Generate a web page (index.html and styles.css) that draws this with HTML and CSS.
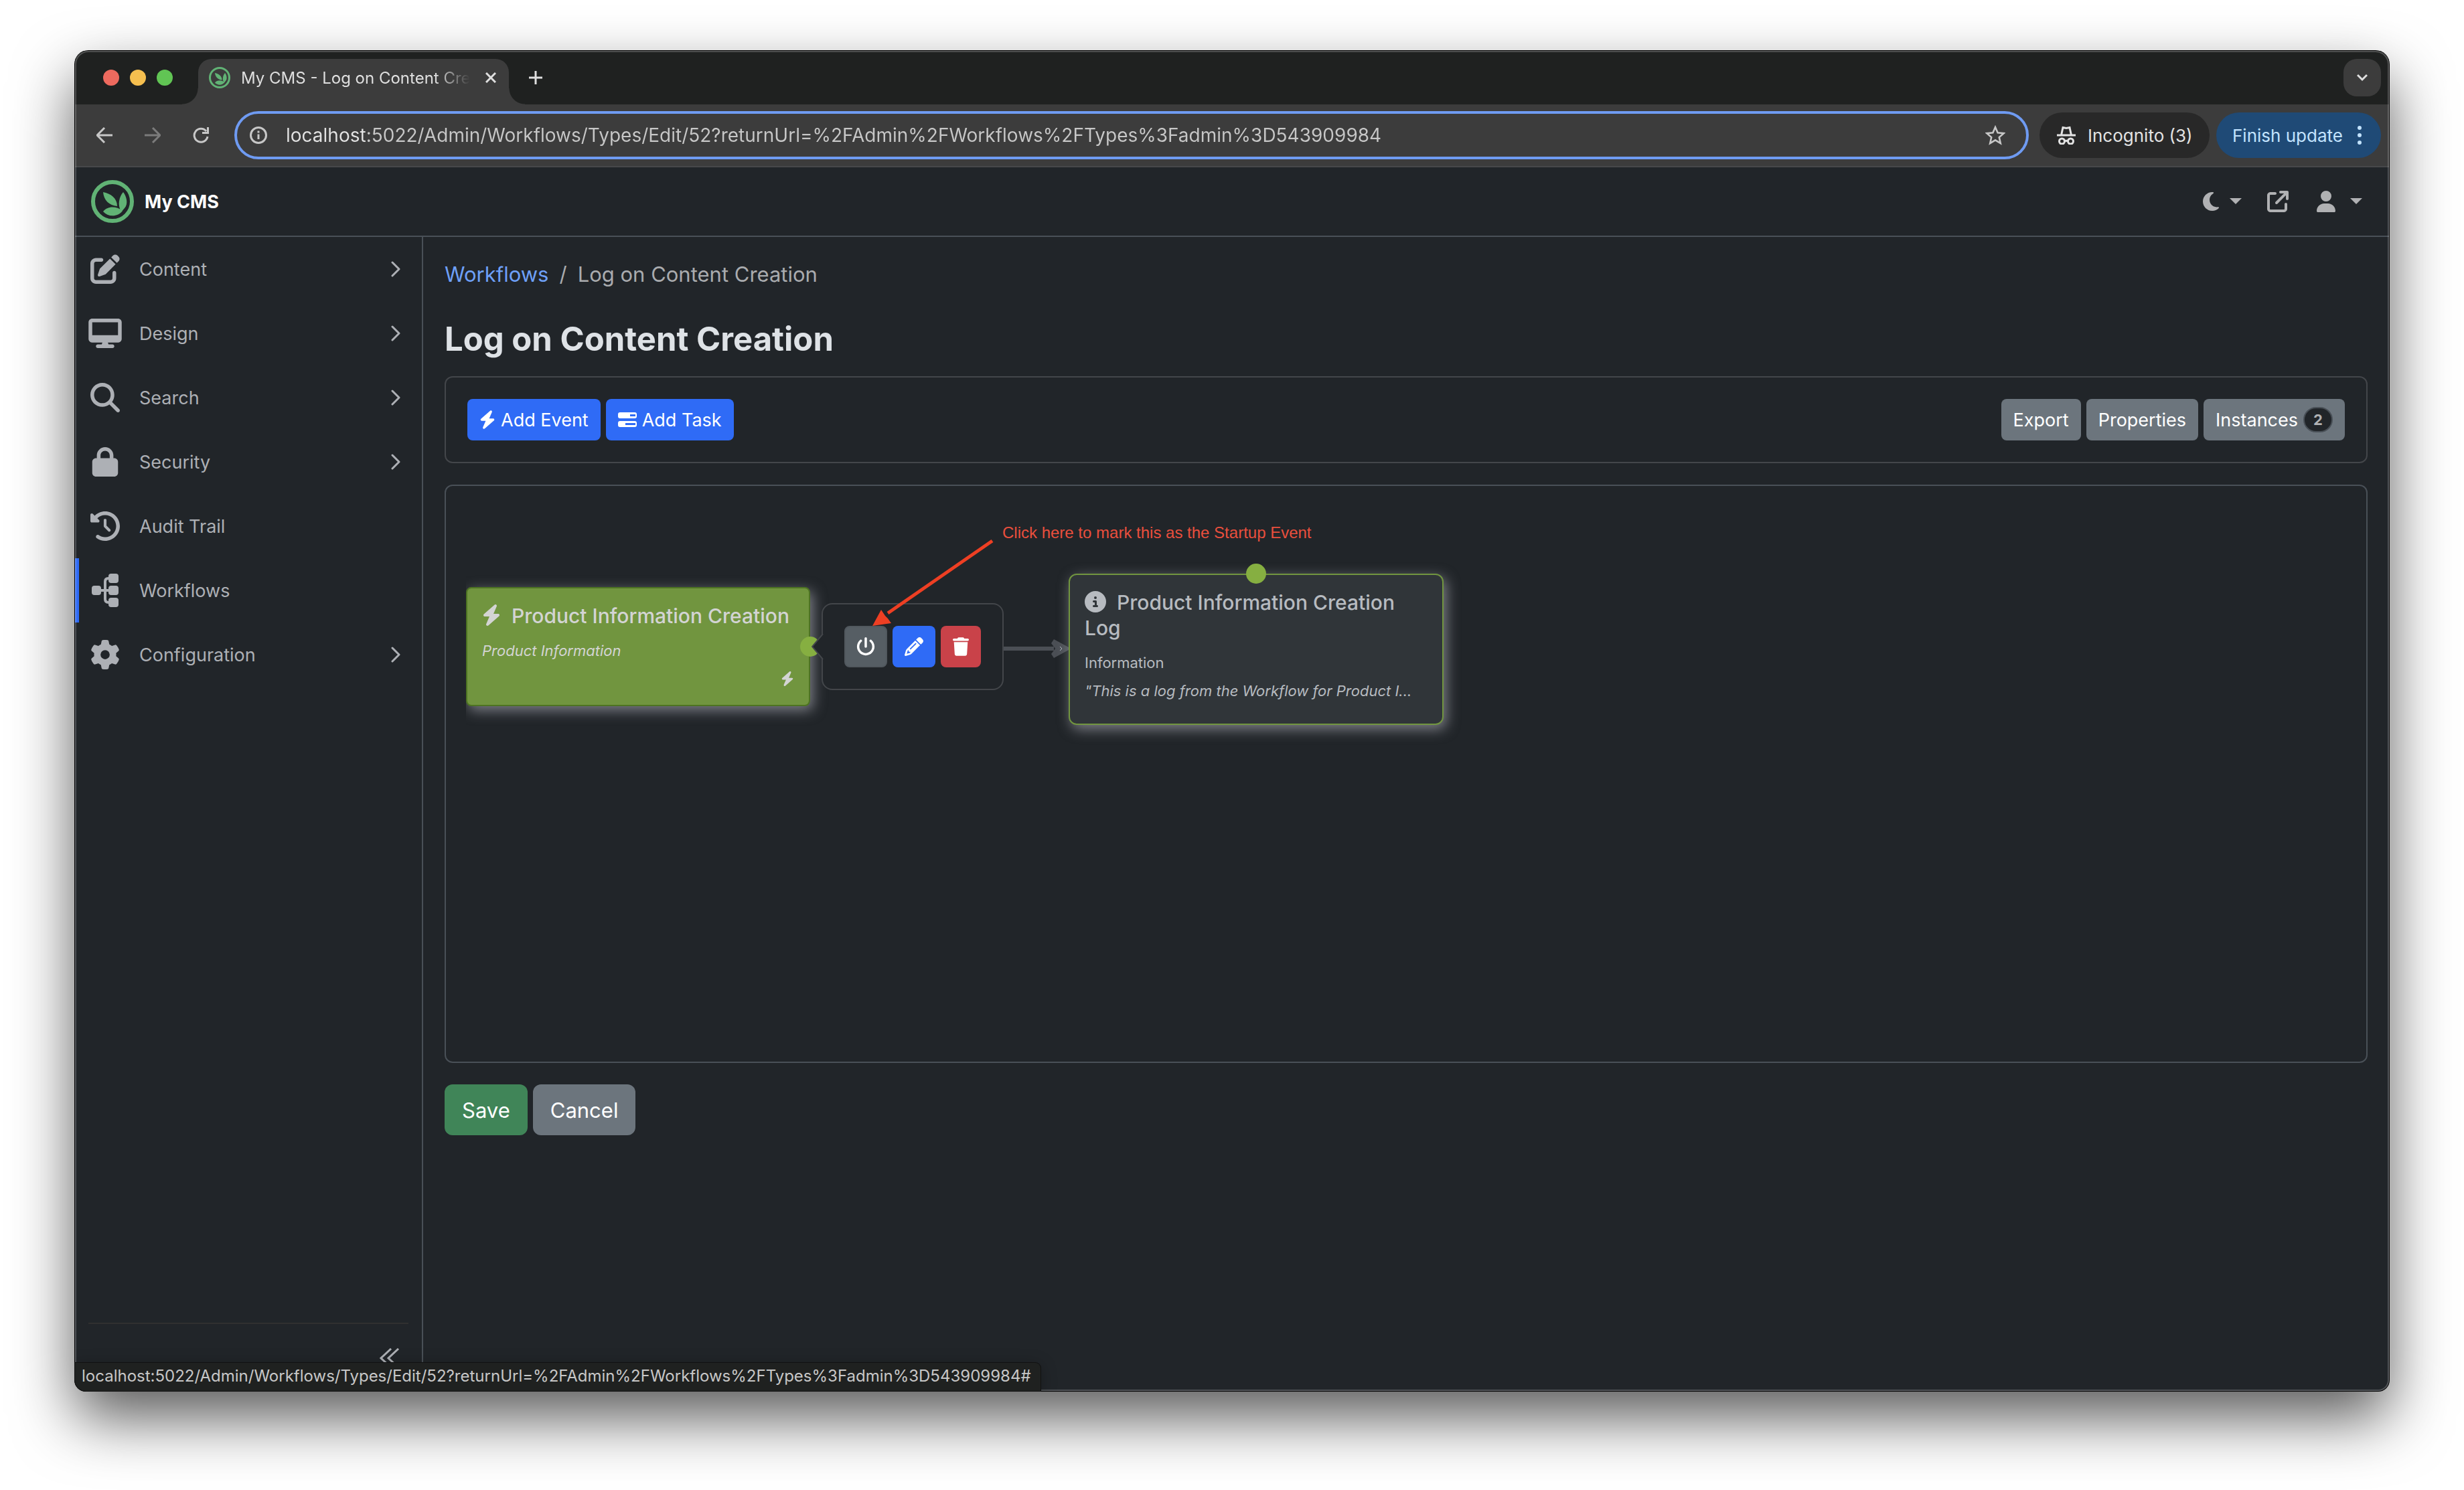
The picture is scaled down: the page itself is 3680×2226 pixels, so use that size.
FILE: index.html
```html
<!DOCTYPE html>
<html lang="en">
<head>
<meta charset="utf-8">
<title>My CMS - Log on Content Creation</title>
<link rel="stylesheet" href="styles.css">
</head>
<body>
<svg class="sprite" aria-hidden="true">
  <symbol id="logo" viewBox="0 0 64 64">
    <circle cx="32" cy="32" r="29" fill="none" stroke="currentColor" stroke-width="6"/>
    <path d="M18 18C29 20 39 27 39 39C27 38 19 30 18 18z"/>
    <path d="M48 18C53 24 56 36 50 42C48 44 47 46 45 47C39 37 42 25 48 18z"/>
    <path d="M18 47C24 39 37 38 47 46C40 55 26 56 18 47z"/>
  </symbol>
  <symbol id="bolt" viewBox="0 0 448 512"><path d="M349.4 44.6c5.9-13.7 1.5-29.7-10.6-38.5s-28.6-8-39.9 1.8l-256 224c-10 8.8-13.6 22.9-8.9 35.3S50.7 288 64 288H175.5L98.6 467.4c-5.9 13.7-1.5 29.7 10.6 38.5s28.6 8 39.9-1.8l256-224c10-8.8 13.6-22.9 8.9-35.3s-16.6-20.7-30-20.7H272.5L349.4 44.6z"/></symbol>
  <symbol id="chevron" viewBox="0 0 14 24"><path d="M2 2l10 10L2 22" fill="none" stroke="currentColor" stroke-width="3" stroke-linecap="round" stroke-linejoin="round"/></symbol>
  <symbol id="caret" viewBox="0 0 18 10"><path d="M0 0h18L9 9z"/></symbol>
</svg>

<div class="window">
  <div class="tabstrip">
    <div class="lights"><i class="light red"></i><i class="light yellow"></i><i class="light green"></i></div>
    <div class="tab">
      <svg class="i32 brand-color"><use href="#logo"/></svg>
      <span class="tab-title">My CMS - Log on Content Cre</span>
      <button class="plain" aria-label="Close tab"><svg class="i16" viewBox="0 0 16 16"><path d="M1 1l14 14M15 1L1 15" fill="none" stroke="currentColor" stroke-width="3"/></svg></button>
    </div>
    <button class="plain new-tab" aria-label="New tab"><svg class="i20" viewBox="0 0 20 20"><path d="M10 0v20M0 10h20" fill="none" stroke="currentColor" stroke-width="3"/></svg></button>
    <button class="tab-search" aria-label="Search tabs"><svg class="i16" viewBox="0 0 16 16"><path d="M1 4l7 7 7-7" fill="none" stroke="currentColor" stroke-width="3"/></svg></button>
  </div>

  <div class="toolbar">
    <div class="nav-buttons">
      <button class="plain" aria-label="Back"><svg class="i24" viewBox="0 0 24 24"><path d="M12 1L1 12l11 11M1 12h23" fill="none" stroke="currentColor" stroke-width="3"/></svg></button>
      <button class="plain dim" aria-label="Forward"><svg class="i24" viewBox="0 0 24 24"><path d="M12 1l11 11-11 11M23 12H0" fill="none" stroke="currentColor" stroke-width="3"/></svg></button>
      <button class="plain" aria-label="Reload"><svg class="i24" viewBox="0 0 24 24"><path d="M22 14A10 10 0 1 1 20 6" fill="none" stroke="currentColor" stroke-width="3"/><path d="M24 0v10H14V7h7V0z"/></svg></button>
    </div>
    <div class="omnibox">
      <svg class="i26" viewBox="0 0 26 26"><circle cx="13" cy="13" r="11.5" fill="none" stroke="currentColor" stroke-width="3"/><path d="M11.5 11.500h3v7.500h-3zM11.500 6.500h3v3h-3z"/></svg>
      <input class="url" type="text" aria-label="Address" value="localhost:5022/Admin/Workflows/Types/Edit/52?returnUrl=%2FAdmin%2FWorkflows%2FTypes%3Fadmin%3D543909984">
      <button class="plain" aria-label="Bookmark this page"><svg class="i30" viewBox="0 0 30 30"><path d="M15 3l3.600 8.300 9 .8-6.800 6 2 8.900-7.800-4.700L7.200 27l2-8.900-6.800-6 9-.8z" fill="none" stroke="currentColor" stroke-width="2.600"/></svg></button>
    </div>
    <button class="pill incognito"><svg class="i28 outline" viewBox="0 0 28 28"><path d="M0 14h28M6.500 14L9 2.500 14 3.500l5-1L21.500 14M12 23q2-1.500 4 0"/><circle cx="7.500" cy="23" r="4"/><circle cx="20.500" cy="23" r="4"/></svg>Incognito (3)</button>
    <button class="pill update">Finish update<svg class="dots" viewBox="0 0 6 28"><circle cx="3" cy="3" r="3"/><circle cx="3" cy="14" r="3"/><circle cx="3" cy="25" r="3"/></svg></button>
  </div>

  <header class="navbar">
    <a class="brand" href="#"><svg class="brand-logo brand-color"><use href="#logo"/></svg>My CMS</a>
    <div class="nav-tools">
      <button class="plain tool" aria-label="Theme"><svg class="moon" viewBox="0 32 384 448"><path d="M223.500 32C100 32 0 132.300 0 256S100 480 223.500 480c60.600 0 115.500-24.200 155.800-63.400c5-4.900 6.300-12.500 3.100-18.700s-10.100-9.700-17-8.500c-9.800 1.700-19.800 2.600-30.100 2.600c-96.900 0-175.500-78.800-175.500-176c0-65.800 36-123.100 89.300-153.300c6.100-3.500 9.200-10.500 7.700-17.300s-7.300-11.900-14.300-12.500c-6.300-.5-12.600-.8-19-.8z"/></svg><svg class="caret"><use href="#caret"/></svg></button>
      <a class="tool" href="#" aria-label="Open site"><svg class="i32" viewBox="0 0 512 512"><path d="M320 0c-17.700 0-32 14.300-32 32s14.300 32 32 32h82.700L201.400 265.400c-12.500 12.500-12.500 32.800 0 45.300s32.800 12.500 45.300 0L448 109.300V192c0 17.700 14.300 32 32 32s32-14.300 32-32V32c0-17.700-14.300-32-32-32H320zM80 32C35.800 32 0 67.800 0 112V432c0 44.200 35.800 80 80 80H400c44.200 0 80-35.800 80-80V320c0-17.700-14.300-32-32-32s-32 14.300-32 32V432c0 8.800-7.200 16-16 16H80c-8.800 0-16-7.200-16-16V112c0-8.800 7.200-16 16-16H192c17.700 0 32-14.300 32-32s-14.300-32-32-32H80z"/></svg></a>
      <button class="plain tool user" aria-label="Account"><svg class="i28x32" viewBox="0 0 448 512"><path d="M224 256A128 128 0 1 0 224 0a128 128 0 1 0 0 256zm-45.700 48C79.800 304 0 383.800 0 482.300C0 498.700 13.300 512 29.700 512H418.300c16.400 0 29.700-13.300 29.700-29.700C448 383.800 368.200 304 269.700 304H178.300z"/></svg><svg class="caret"><use href="#caret"/></svg></button>
    </div>
  </header>

  <div class="body">
    <aside class="sidebar">
      <nav>
        <a class="item" href="#"><span class="ico"><svg class="i44" viewBox="0 0 512 512"><path d="M471.600 21.700c-21.900-21.900-57.300-21.900-79.200 0L362.300 51.700l97.900 97.900 30.100-30.100c21.900-21.900 21.900-57.300 0-79.200L471.600 21.700zm-299.200 220c-6.100 6.100-10.800 13.600-13.500 21.900l-29.600 88.800c-2.900 8.600-.6 18.100 5.800 24.600s15.900 8.700 24.600 5.800l88.800-29.600c8.200-2.700 15.700-7.400 21.900-13.500L437.700 172.300 339.700 74.300 172.400 241.700zM96 64C43 64 0 107 0 160V416c0 53 43 96 96 96H352c53 0 96-43 96-96V320c0-17.700-14.300-32-32-32s-32 14.300-32 32v96c0 17.700-14.300 32-32 32H96c-17.700 0-32-14.300-32-32V160c0-17.700 14.300-32 32-32h96c17.700 0 32-14.300 32-32s-14.300-32-32-32H96z"/></svg></span>Content<svg class="chev"><use href="#chevron"/></svg></a>
        <a class="item" href="#"><span class="ico"><svg class="i50x44" viewBox="0 0 576 512"><path d="M64 0C28.700 0 0 28.700 0 64V352c0 35.300 28.700 64 64 64H240l-10.700 32H160c-17.700 0-32 14.300-32 32s14.300 32 32 32H416c17.700 0 32-14.300 32-32s-14.300-32-32-32H346.700L336 416H512c35.300 0 64-28.700 64-64V64c0-35.300-28.700-64-64-64H64zM512 64V288H64V64H512z"/></svg></span>Design<svg class="chev"><use href="#chevron"/></svg></a>
        <a class="item" href="#"><span class="ico"><svg class="i44" viewBox="0 0 512 512"><path d="M416 208c0 45.900-14.900 88.300-40 122.700L502.600 457.400c12.500 12.500 12.500 32.800 0 45.300s-32.800 12.500-45.300 0L330.700 376c-34.400 25.200-76.800 40-122.700 40C93.100 416 0 322.900 0 208S93.100 0 208 0S416 93.100 416 208zM208 352a144 144 0 1 0 0-288 144 144 0 1 0 0 288z"/></svg></span>Search<svg class="chev"><use href="#chevron"/></svg></a>
        <a class="item" href="#"><span class="ico"><svg class="i44" viewBox="-32 0 512 512"><path d="M144 144v48H304V144c0-44.200-35.800-80-80-80s-80 35.800-80 80zM80 192V144C80 64.500 144.500 0 224 0s144 64.500 144 144v48h16c35.300 0 64 28.700 64 64V448c0 35.300-28.700 64-64 64H64c-35.300 0-64-28.700-64-64V256c0-35.300 28.700-64 64-64H80z"/></svg></span>Security<svg class="chev"><use href="#chevron"/></svg></a>
        <a class="item" href="#"><span class="ico"><svg class="i44" viewBox="0 0 512 512"><path d="M75 75L41 41C25.900 25.900 0 36.600 0 57.900V168c0 13.300 10.700 24 24 24H134.100c21.400 0 32.100-25.900 17-41l-30.800-30.800C155 85.500 203 64 256 64c106 0 192 86 192 192s-86 192-192 192c-40.800 0-78.600-12.700-109.700-34.400c-14.500-10.100-34.400-6.600-44.600 7.900s-6.600 34.400 7.900 44.600C151.200 495 201.700 512 256 512c141.400 0 256-114.600 256-256S397.400 0 256 0C185.300 0 121.300 28.700 75 75zm181 53c-13.300 0-24 10.700-24 24V256c0 6.400 2.500 12.500 7 17l72 72c9.400 9.400 24.600 9.400 33.900 0s9.400-24.600 0-33.900l-65-65V152c0-13.300-10.700-24-24-24z"/></svg></span>Audit Trail</a>
        <a class="item active" href="#"><span class="ico"><svg class="i40x50" viewBox="0 0 40 50"><path d="M14 25h12M34 7h-9q-5 0-5 5v26q0 5 5 5h9" fill="none" stroke="currentColor" stroke-width="4"/><rect x="0" y="18" width="14" height="14" rx="4"/><rect x="25" y="0" width="15" height="14" rx="4"/><rect x="25" y="18" width="15" height="14" rx="4"/><rect x="25" y="36" width="15" height="14" rx="4"/></svg></span>Workflows</a>
        <a class="item" href="#"><span class="ico"><svg class="i44" viewBox="0 0 512 512"><path d="M495.900 166.600c3.200 8.700 .5 18.400-6.400 24.600l-43.300 39.400c1.100 8.300 1.700 16.800 1.700 25.400s-.6 17.100-1.700 25.400l43.300 39.400c6.900 6.200 9.600 15.900 6.400 24.600c-4.400 11.900-9.700 23.300-15.800 34.300l-4.700 8.100c-6.600 11-14 21.400-22.100 31.200c-5.900 7.200-15.700 9.600-24.500 6.800l-55.700-17.700c-13.400 10.300-28.200 18.900-44 25.400l-12.500 57.100c-2 9.100-9 16.300-18.200 17.800c-13.800 2.300-28 3.500-42.500 3.500s-28.700-1.200-42.500-3.500c-9.200-1.500-16.200-8.700-18.200-17.800l-12.500-57.100c-15.800-6.500-30.600-15.100-44-25.400L83.100 425.900c-8.800 2.800-18.600 .3-24.500-6.800c-8.100-9.800-15.500-20.200-22.100-31.200l-4.700-8.100c-6.100-11-11.400-22.400-15.800-34.300c-3.200-8.700-.5-18.400 6.400-24.600l43.300-39.400C64.600 273.100 64 264.600 64 256s.6-17.100 1.700-25.400L22.400 191.200c-6.900-6.200-9.600-15.900-6.400-24.600c4.400-11.900 9.700-23.300 15.800-34.300l4.700-8.100c6.600-11 14-21.400 22.100-31.200c5.900-7.200 15.700-9.600 24.500-6.800l55.700 17.700c13.400-10.300 28.200-18.900 44-25.400l12.500-57.100c2-9.100 9-16.300 18.200-17.800C227.300 1.200 241.500 0 256 0s28.700 1.200 42.500 3.500c9.200 1.500 16.200 8.700 18.200 17.800l12.500 57.100c15.800 6.500 30.600 15.100 44 25.400l55.700-17.700c8.800-2.800 18.600-.3 24.500 6.800c8.100 9.800 15.500 20.200 22.100 31.200l4.700 8.100c6.100 11 11.400 22.400 15.800 34.300zM256 336a80 80 0 1 0 0-160 80 80 0 1 0 0 160z"/></svg></span>Configuration<svg class="chev"><use href="#chevron"/></svg></a>
      </nav>
      <div class="collapse">
        <button class="plain" aria-label="Collapse menu"><svg class="i30" viewBox="0 0 30 30"><path d="M17 1L2 15l15 14M28 1L13 15l15 14" fill="none" stroke="currentColor" stroke-width="3"/></svg></button>
      </div>
    </aside>

    <main class="main">
      <ol class="breadcrumb"><li><a href="#">Workflows</a></li><li>/</li><li>Log on Content Creation</li></ol>
      <h1>Log on Content Creation</h1>

      <section class="card actions">
        <div class="group">
          <button class="btn primary"><svg class="bolt-md"><use href="#bolt"/></svg>Add Event</button>
          <button class="btn primary"><svg class="task" viewBox="0 0 28 22"><path fill-rule="evenodd" d="M3 0h22a3 3 0 0 1 3 3v3a3 3 0 0 1-3 3H3a3 3 0 0 1-3-3V3a3 3 0 0 1 3-3zM18 3v3h8V3zM3 13h22a3 3 0 0 1 3 3v3a3 3 0 0 1-3 3H3a3 3 0 0 1-3-3v-3a3 3 0 0 1 3-3zM11 16v3h15v-3z"/></svg>Add Task</button>
        </div>
        <div class="group">
          <button class="btn">Export</button>
          <button class="btn">Properties</button>
          <button class="btn">Instances<span class="badge">2</span></button>
        </div>
      </section>

      <section class="card canvas">
        <div class="surface">
          <article class="node event">
            <h2><svg class="node-bolt"><use href="#bolt"/></svg>Product Information Creation</h2>
            <p><em>Product Information</em></p>
            <svg class="corner-bolt"><use href="#bolt"/></svg>
          </article>
          <i class="port port-out"></i>
          <svg class="link" viewBox="0 0 100 30"><path d="M0 15h76" fill="none" stroke="currentColor" stroke-width="6"/><path d="M76 1L98 13v4L76 29l-4-6 6-8-6-8z"/><path d="M85 12l3 3-3 3" fill="none" stroke="#adb5bd" stroke-width="1"/></svg>
          <article class="node task-node">
            <h2><svg class="node-info" viewBox="0 0 512 512"><path d="M256 512A256 256 0 1 0 256 0a256 256 0 1 0 0 512zM216 336h24V272H216c-13.300 0-24-10.700-24-24s10.700-24 24-24h48c13.300 0 24 10.700 24 24v88h8c13.300 0 24 10.700 24 24s-10.700 24-24 24H216c-13.300 0-24-10.700-24-24s10.700-24 24-24zm40-208a32 32 0 1 1 0 64 32 32 0 1 1 0-64z"/></svg>Product Information Creation Log</h2>
            <p>Information</p>
            <p class="quote"><em>"This is a log from the Workflow for Product I...</em></p>
          </article>
          <i class="port port-in"></i>
          <div class="popover">
            <svg class="tip" viewBox="0 0 18 40"><path d="M18 1L1 20l17 19z" class="tip-fill"/><path d="M17 1L1 20l16 19" class="tip-line"/></svg>
            <button class="btn square startup" aria-label="Startup"><svg class="i28" viewBox="0 0 512 512"><path d="M288 32c0-17.700-14.300-32-32-32s-32 14.300-32 32V256c0 17.700 14.300 32 32 32s32-14.300 32-32V32zM143.500 120.600c13.600-11.300 15.400-31.500 4.100-45.100s-31.500-15.400-45.100-4.100C49.700 115.400 16 181.800 16 256c0 132.500 107.500 240 240 240s240-107.500 240-240c0-74.200-33.800-140.600-86.600-184.600c-13.600-11.300-33.800-9.400-45.100 4.100s-9.400 33.800 4.100 45.100c38.900 32.300 63.500 81 63.500 135.400c0 97.200-78.800 176-176 176s-176-78.800-176-176c0-54.400 24.700-103.100 63.500-135.400z"/></svg></button>
            <button class="btn square primary" aria-label="Edit"><svg class="i28" viewBox="0 0 512 512"><path d="M410.300 231l11.300-11.300-33.900-33.900-62.100-62.100L291.700 89.800l-11.300 11.300-22.600 22.600L58.600 322.900c-10.400 10.400-18 23.300-22.200 37.400L1 480.700c-2.500 8.400-.2 17.500 6.100 23.700s15.300 8.500 23.700 6.100l120.300-35.400c14.100-4.200 27-11.800 37.400-22.200L387.700 253.700 410.300 231zM160 399.400l-9.100 22.700c-4 3.100-8.500 5.400-13.300 6.900L59.400 452l23-78.100c1.400-4.900 3.800-9.400 6.900-13.300l22.700-9.100v32c0 8.800 7.200 16 16 16h32zM362.700 18.700L348.300 33.200 325.700 55.800 314.300 67.100l33.900 33.900 62.100 62.100 33.900 33.900 11.300-11.300 22.600-22.600 14.500-14.500c25-25 25-65.500 0-90.500L453.300 18.700c-25-25-65.500-25-90.500 0zm-47.400 168l-144 144c-6.200 6.200-16.400 6.200-22.600 0s-6.200-16.400 0-22.600l144-144c6.200-6.200 16.400-6.200 22.600 0s6.200 16.400 0 22.600z"/></svg></button>
            <button class="btn square danger" aria-label="Delete"><svg class="i24x28" viewBox="0 0 448 512"><path d="M135.200 17.700L128 32H32C14.300 32 0 46.300 0 64S14.300 96 32 96H416c17.700 0 32-14.300 32-32s-14.300-32-32-32H320l-7.200-14.300C307.400 6.800 296.300 0 284.200 0H163.800c-12.100 0-23.200 6.800-28.600 17.700zM416 128H32L53.200 467c1.600 25.300 22.600 45 47.900 45H346.900c25.300 0 46.300-19.700 47.900-45L416 128z"/></svg></button>
          </div>
          <svg class="pointer" viewBox="0 0 184 132"><path d="M180 4L24 112" fill="none" stroke="currentColor" stroke-width="5"/><path d="M1 131L14 107l6 9 4 4 5 7z"/></svg>
          <p class="note">Click here to mark this as the Startup Event</p>
        </div>
      </section>

      <div class="form-buttons">
        <button class="btn large success">Save</button>
        <button class="btn large">Cancel</button>
      </div>
    </main>
  </div>
  <div class="status">localhost:5022/Admin/Workflows/Types/Edit/52?returnUrl=%2FAdmin%2FWorkflows%2FTypes%3Fadmin%3D543909984#</div>
</div>
</body>
</html>
```
FILE: styles.css
```css
* { box-sizing: border-box; }

body {
  margin: 0;
  min-height: 100vh;
  padding: 76px 112px 148px;
  display: flex;
  background: #fff;
  color: #dee2e6;
  font-family: Inter, "Liberation Sans", sans-serif;
  font-size: 27px;
}

button, input { font: inherit; color: inherit; margin: 0; }
a { color: inherit; text-decoration: none; }
h1, h2, p, ol { margin: 0; padding: 0; font-weight: 400; }
svg { display: block; flex: none; fill: currentColor; }
.sprite { position: absolute; width: 0; height: 0; }
.outline { fill: none; stroke: currentColor; stroke-width: 3; }
.plain { display: flex; align-items: center; border: 0; padding: 0; background: none; }

.i16 { width: 16px; height: 16px; }
.i20 { width: 20px; height: 20px; }
.i24 { width: 24px; height: 24px; }
.i24x28 { width: 24px; height: 28px; }
.i26 { width: 26px; height: 26px; }
.i28 { width: 28px; height: 28px; }
.i28x32 { width: 28px; height: 32px; }
.i30 { width: 30px; height: 30px; }
.i32 { width: 32px; height: 32px; }
.i44 { width: 44px; height: 44px; }
.i50x44 { width: 50px; height: 44px; }
.i40x50 { width: 40px; height: 50px; }
.brand-color { color: #61b375; }

/* Window frame */
.window {
  flex: 1;
  min-width: 0;
  position: relative;
  display: flex;
  flex-direction: column;
  background: #212529;
  border-radius: 20px 20px 16px 16px;
  overflow: clip;
  overflow-clip-margin: 1px;
  box-shadow: 0 0 0 1px #000, 0 40px 90px rgba(0, 0, 0, .65);
}
.window::after {
  content: "";
  position: absolute;
  inset: 0;
  border: 2px solid rgba(255, 255, 255, .22);
  border-radius: inherit;
  pointer-events: none;
}

/* Tab strip */
.tabstrip { height: 80px; display: flex; align-items: center; padding: 0 12px 0 42px; background: #1f2120; color: #dfdfdf; }
.lights { display: flex; gap: 16px; margin-right: 38px; }
.light { width: 24px; height: 24px; border-radius: 50%; }
.red { background: #ed6a5e; }
.yellow { background: #f5bf4f; }
.green { background: #61c554; }
.tab {
  position: relative;
  width: 464px;
  height: 68px;
  align-self: flex-end;
  display: flex;
  align-items: center;
  padding: 0 24px 12px 16px;
  border-radius: 20px 20px 0 0;
  background: #3c3c3c;
}
.tab::before, .tab::after { content: ""; position: absolute; bottom: 0; width: 24px; height: 24px; }
.tab::before { right: 100%; background: radial-gradient(circle at 0 0, #1f2120 23px, #3c3c3c 24px); }
.tab::after { left: 100%; background: radial-gradient(circle at 100% 0, #1f2120 23px, #3c3c3c 24px); }
.tab-title {
  flex: 1;
  margin: 0 22px 0 16px;
  white-space: nowrap;
  font-size: 24px;
  mask-image: linear-gradient(90deg, #000 290px, transparent 342px);
}
.new-tab { margin-left: 30px; }
.tab-search {
  margin-left: auto;
  width: 56px;
  height: 56px;
  display: grid;
  place-items: center;
  border: 0;
  border-radius: 20px;
  background: #3c3c3c;
}

/* Address bar */
.toolbar {
  height: 94px;
  display: flex;
  align-items: center;
  padding: 0 12px 0 32px;
  background: #3c3c3c;
  border-bottom: 2px solid #47484a;
  color: #c7c7c7;
}
.nav-buttons { display: flex; gap: 48px; margin-right: 38px; }
.dim { color: #7b7b7b; }
.omnibox {
  flex: 1;
  height: 72px;
  display: flex;
  align-items: center;
  padding: 0 31px 0 19px;
  border: 4px solid #6f9bf2;
  border-radius: 36px;
  margin-right: 16px;
}
.url {
  flex: 1;
  min-width: 0;
  margin: 0 20px 0 28px;
  padding: 0;
  border: 0;
  outline: 0;
  background: linear-gradient(90deg, #e3e3e3 120px, #c7c7c7 120px);
  background-clip: text;
  color: transparent;
  font-size: 28px;
}
.pill { height: 68px; display: flex; align-items: center; border: 0; border-radius: 34px; font-size: 26px; white-space: nowrap; }
.incognito { width: 254px; gap: 18px; padding: 0 26px; margin-right: 10px; background: #282828; color: #e3e3e3; }
.update { width: 246px; justify-content: space-between; padding: 0 29px 0 24px; background: #1f4a76; color: #c2e3ff; }
.dots { width: 6px; height: 28px; }

/* Site header */
.navbar {
  height: 104px;
  display: flex;
  align-items: center;
  justify-content: space-between;
  padding: 0 40px 0 24px;
  border-bottom: 2px solid #495057;
}
.brand { display: flex; align-items: center; gap: 16px; color: #fff; font-weight: 700; }
.brand-logo { width: 64px; height: 64px; }
.nav-tools { display: flex; gap: 38px; color: #b0b1b3; }
.tool { display: flex; align-items: center; gap: 16px; }
.user { gap: 22px; margin-left: 4px; }
.moon { width: 24px; height: 28px; }
.caret { width: 18px; height: 10px; }

.body { flex: 1; display: flex; }

/* Sidebar */
.sidebar { width: 520px; flex: none; display: flex; flex-direction: column; border-right: 2px solid #495057; color: #adb0b5; }
.item { height: 96px; display: flex; align-items: center; padding-right: 32px; border-left: 6px solid transparent; }
.item.active { border-left-color: #2f6bf6; }
.ico { width: 50px; margin: 0 26px 0 14px; display: grid; place-items: center; }
.chev { width: 14px; height: 24px; margin-left: auto; }
.collapse { margin: auto 20px 0; height: 102px; padding: 36px 13px 0 0; display: flex; align-items: flex-start; justify-content: flex-end; border-top: 2px solid #303030; }

/* Content */
.main { flex: 1; min-width: 0; padding: 32px; }
.breadcrumb { display: flex; gap: 16px; list-style: none; line-height: 48px; font-size: 31px; color: #a9abae; }
.breadcrumb a { color: #6ea0f8; }
h1 { margin: 42px 0 24px; font-size: 49px; line-height: 62px; font-weight: 700; }
.card { border: 2px solid #495057; border-radius: 12px; }
.actions { display: flex; justify-content: space-between; padding: 32px; border-color: #43464a; }
.group { display: flex; gap: 8px; }

.btn {
  height: 62px;
  display: flex;
  align-items: center;
  justify-content: center;
  gap: 8px;
  padding: 0 18px;
  border: 0;
  border-radius: 8px;
  background: #6c757d;
  color: #fff;
  white-space: nowrap;
}
.primary { background: #2f6bf6; }
.success { background: #408558; }
.danger { background: #c94249; }
.large { height: 76px; padding: 0 26px; border-radius: 12px; font-size: 31px; }
.badge {
  min-width: 44px;
  height: 38px;
  display: grid;
  place-items: center;
  border: 2px solid #495057;
  border-radius: 19px;
  background: #212529;
  color: #b0b1b3;
  font-size: 22px;
  font-weight: 700;
}
.bolt-md { width: 24px; height: 28px; }
.task { width: 28px; height: 22px; }
.form-buttons { display: flex; gap: 8px; margin-top: 32px; }

/* Workflow canvas: nodes are placed freely on the surface */
.canvas { height: 864px; margin-top: 32px; padding: 30px; }
.surface { position: relative; height: 100%; overflow: clip; }
.node {
  position: absolute;
  padding: 22px 22px 0;
  border: 2px solid #4d7322;
  border-radius: 8px;
  box-shadow: 4px 6px 20px rgba(190, 190, 200, .6);
}
.node h2 { font-size: 30px; line-height: 38px; font-weight: 500; }
.node h2 svg { display: inline-block; vertical-align: -4px; }
.node p { margin-top: 15px; font-size: 22px; line-height: 36px; }
.event { left: 0; top: 121px; width: 514px; height: 178px; background: #71953f; color: #d3d4d3; }
.node-bolt { width: 28px; height: 32px; margin-right: 16px; }
.corner-bolt { width: 20px; height: 22px; margin: 13px 0 0 auto; }
.task-node { left: 900px; top: 101px; width: 560px; height: 226px; border-color: #71953f; border-radius: 12px; background: #303539; color: #b7bbc0; }
.node-info { width: 32px; height: 32px; margin-right: 16px; }
.node p.quote { margin-top: 6px; white-space: nowrap; }
.port { position: absolute; width: 30px; height: 30px; border-radius: 50%; background: #86af41; }
.port-out { left: 499px; top: 195px; }
.port-in { left: 1165px; top: 86px; }
.link { position: absolute; left: 802px; top: 198px; width: 100px; height: 30px; color: #4b4f55; }
.popover {
  position: absolute;
  left: 531px;
  top: 145px;
  display: flex;
  gap: 8px;
  padding: 32px;
  border: 2px solid #43464a;
  border-radius: 16px;
  background: #212529;
}
.tip { position: absolute; left: -17px; top: 43px; width: 18px; height: 40px; }
.tip-fill { fill: #212529; }
.tip-line { fill: none; stroke: #43464a; stroke-width: 2; }
.square { width: 64px; padding: 0; }
.square.danger { width: 60px; }
.startup { background: #565e64; border: 2px solid #51585e; }
.pointer { position: absolute; left: 606px; top: 48px; width: 184px; height: 132px; color: #ee3f23; }
.note { position: absolute; left: 801px; top: 22px; font: 24px/36px "Liberation Sans", Arial, sans-serif; color: #e94f3d; }

/* Link target shown over the page */
.status {
  position: absolute;
  left: 0;
  bottom: 0;
  height: 42px;
  padding: 0 14px 0 10px;
  border-radius: 0 8px 0 16px;
  background: #1f2120;
  box-shadow: 0 0 0 1px #111, 0 4px 24px rgba(0, 0, 0, .3);
  color: #c7c7c7;
  font-size: 24px;
  line-height: 40px;
  white-space: nowrap;
  z-index: 1;
}
```
